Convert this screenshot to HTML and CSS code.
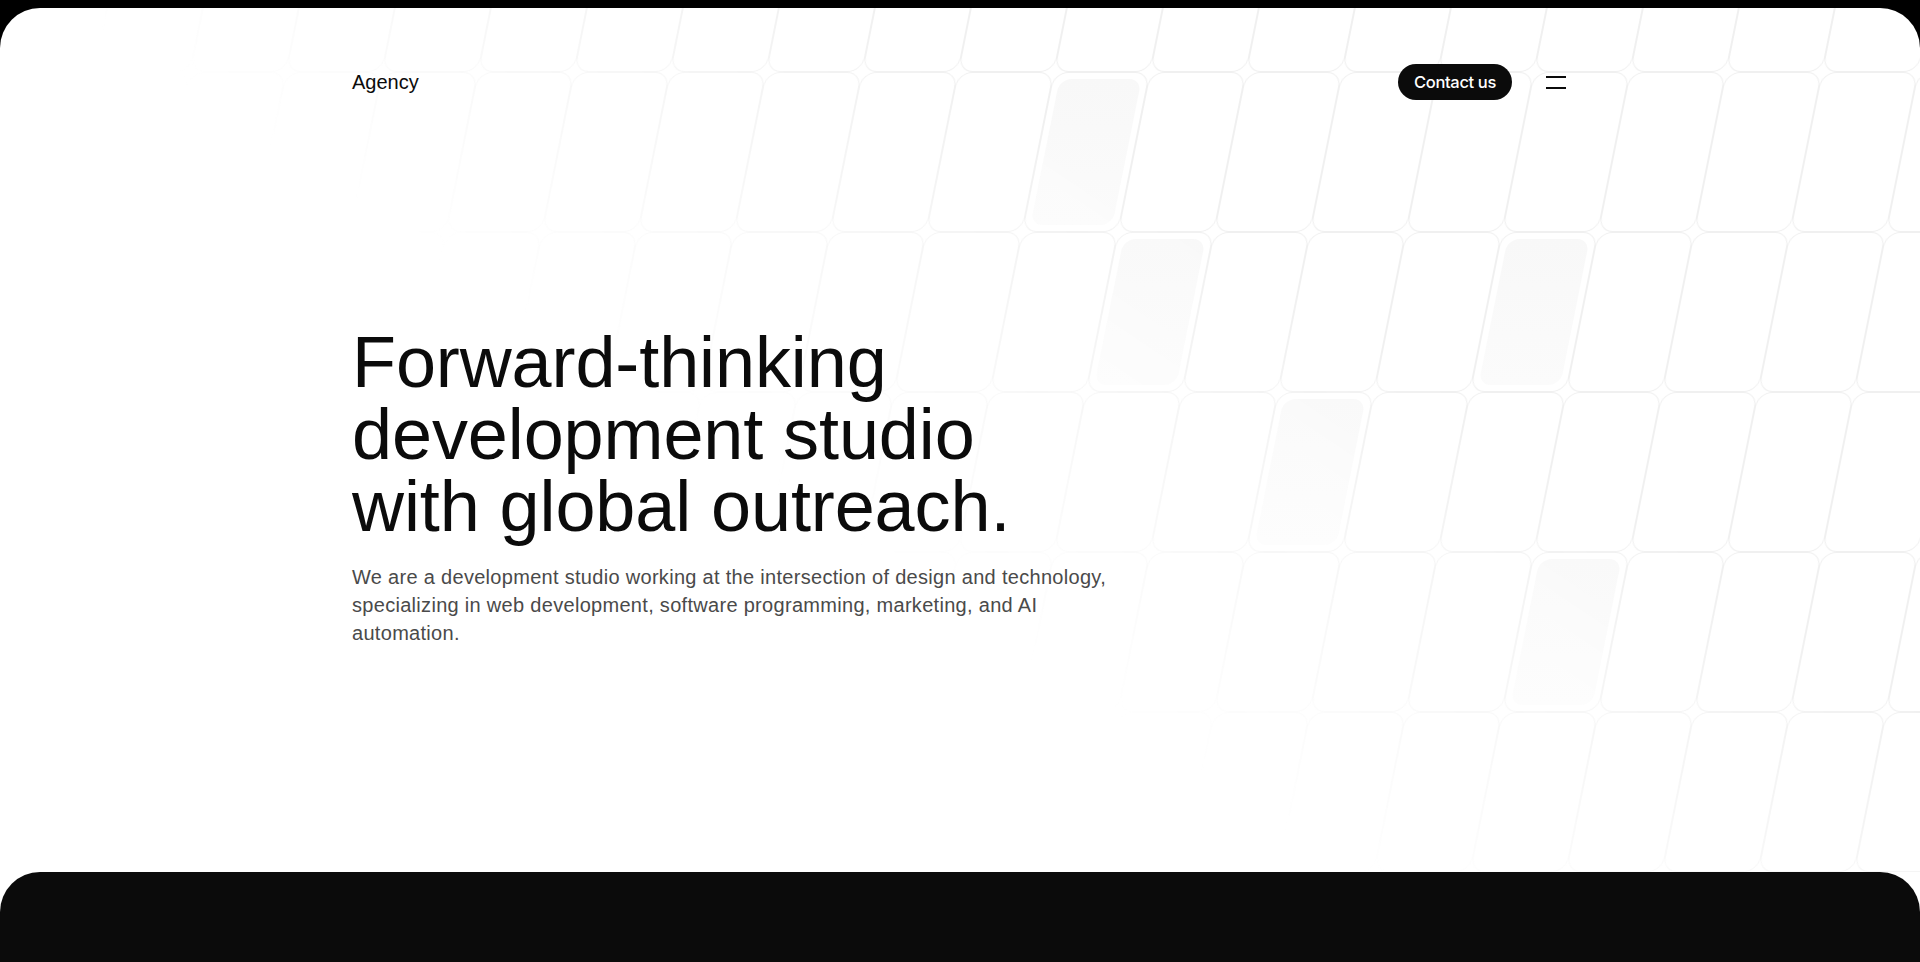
FILE: index.html
```html
<!DOCTYPE html>
<html lang="en">
<head>
<meta charset="utf-8">
<title>Agency</title>
<link rel="stylesheet" href="styles.css">
</head>
<body>
<div class="page">
  <div class="card">
    <section class="hero">
      <svg class="grid" width="1920" height="864" viewBox="0 8 1920 864" aria-hidden="true">
        <defs>
          <pattern id="cells" width="96" height="160" patternUnits="userSpaceOnUse" patternTransform="translate(-2 72) skewX(-11.31)">
            <rect x="0.5" y="0.5" width="95" height="159" rx="14" fill="none" stroke="#f0f0f0" stroke-width="1"/>
          </pattern>
          <linearGradient id="fillg" x1="0" y1="0" x2="0" y2="1">
            <stop offset="0" stop-color="#f8f8f8"/>
            <stop offset="1" stop-color="#fbfbfb"/>
          </linearGradient>
        </defs>
        <rect x="0" y="8" width="1920" height="864" fill="url(#cells)"/>
        <g transform="translate(-2 72) skewX(-11.31)">
          <rect x="1063" y="7" width="82" height="146" rx="12" fill="url(#fillg)"/>
          <rect x="1159" y="167" width="82" height="146" rx="12" fill="url(#fillg)"/>
          <rect x="1543" y="167" width="82" height="146" rx="12" fill="url(#fillg)"/>
          <rect x="1351" y="327" width="82" height="146" rx="12" fill="url(#fillg)"/>
          <rect x="1639" y="487" width="82" height="146" rx="12" fill="url(#fillg)"/>
        </g>
      </svg>
      <div class="container">
        <header class="nav">
          <a class="logo" href="#">Agency</a>
          <div class="nav-right">
            <a class="btn-contact" href="#">Contact us</a>
            <button class="menu" aria-label="Menu"><span></span><span></span></button>
          </div>
        </header>
        <h1 class="title">Forward-thinking<br>development studio<br>with global outreach.</h1>
        <p class="lead">We are a development studio working at the intersection of design and technology, specializing in web development, software programming, marketing, and AI automation.</p>
      </div>
    </section>
    <section class="dark"></section>
  </div>
</div>
</body>
</html>
```

FILE: styles.css
```css
html, body {
  margin: 0;
  padding: 0;
  background: #000;
}
body {
  font-family: "Liberation Sans", Arial, sans-serif;
  color: #0b0b0b;
}
.page {
  padding-top: 8px;
}
.card {
  background: #fff;
  border-radius: 40px 40px 0 0;
  overflow: hidden;
}
.hero {
  position: relative;
  height: 864px;
}
.grid {
  position: absolute;
  left: 0;
  top: 0;
  display: block;
  -webkit-mask-image: linear-gradient(34deg, transparent 42%, #000 68%);
  mask-image: linear-gradient(34deg, transparent 42%, #000 68%);
}
.container {
  position: relative;
  max-width: 1216px;
  margin: 0 auto;
}
.nav {
  display: flex;
  justify-content: space-between;
  align-items: center;
  padding-top: 56px;
  height: 36px;
}
.logo {
  font-size: 20px;
  color: #0b0b0b;
  text-decoration: none;
}
.nav-right {
  display: flex;
  align-items: center;
  gap: 32px;
}
.btn-contact {
  display: inline-flex;
  align-items: center;
  height: 36px;
  padding: 0 16px;
  border-radius: 18px;
  background: #0b0b0b;
  color: #fff;
  font-family: Inter, "Liberation Sans", sans-serif;
  font-weight: 500;
  font-size: 16.5px;
  letter-spacing: -0.35px;
  text-decoration: none;
}
.menu {
  width: 24px;
  height: 24px;
  padding: 0;
  border: 0;
  background: none;
  display: flex;
  flex-direction: column;
  justify-content: center;
  align-items: center;
  gap: 9px;
}
.menu span {
  display: block;
  width: 20px;
  height: 2px;
  background: #0b0b0b;
}
.title {
  margin: 226px 0 0;
  font-size: 72px;
  line-height: 72px;
  font-weight: 400;
  letter-spacing: -0.1px;
  color: #0b0b0b;
}
.lead {
  margin: 21px 0 0;
  max-width: 770px;
  font-size: 20px;
  line-height: 28px;
  letter-spacing: 0.3px;
  color: #4a4a4a;
}
.dark {
  background: #0b0b0b;
  border-radius: 40px 40px 0 0;
  height: 240px;
}
```
